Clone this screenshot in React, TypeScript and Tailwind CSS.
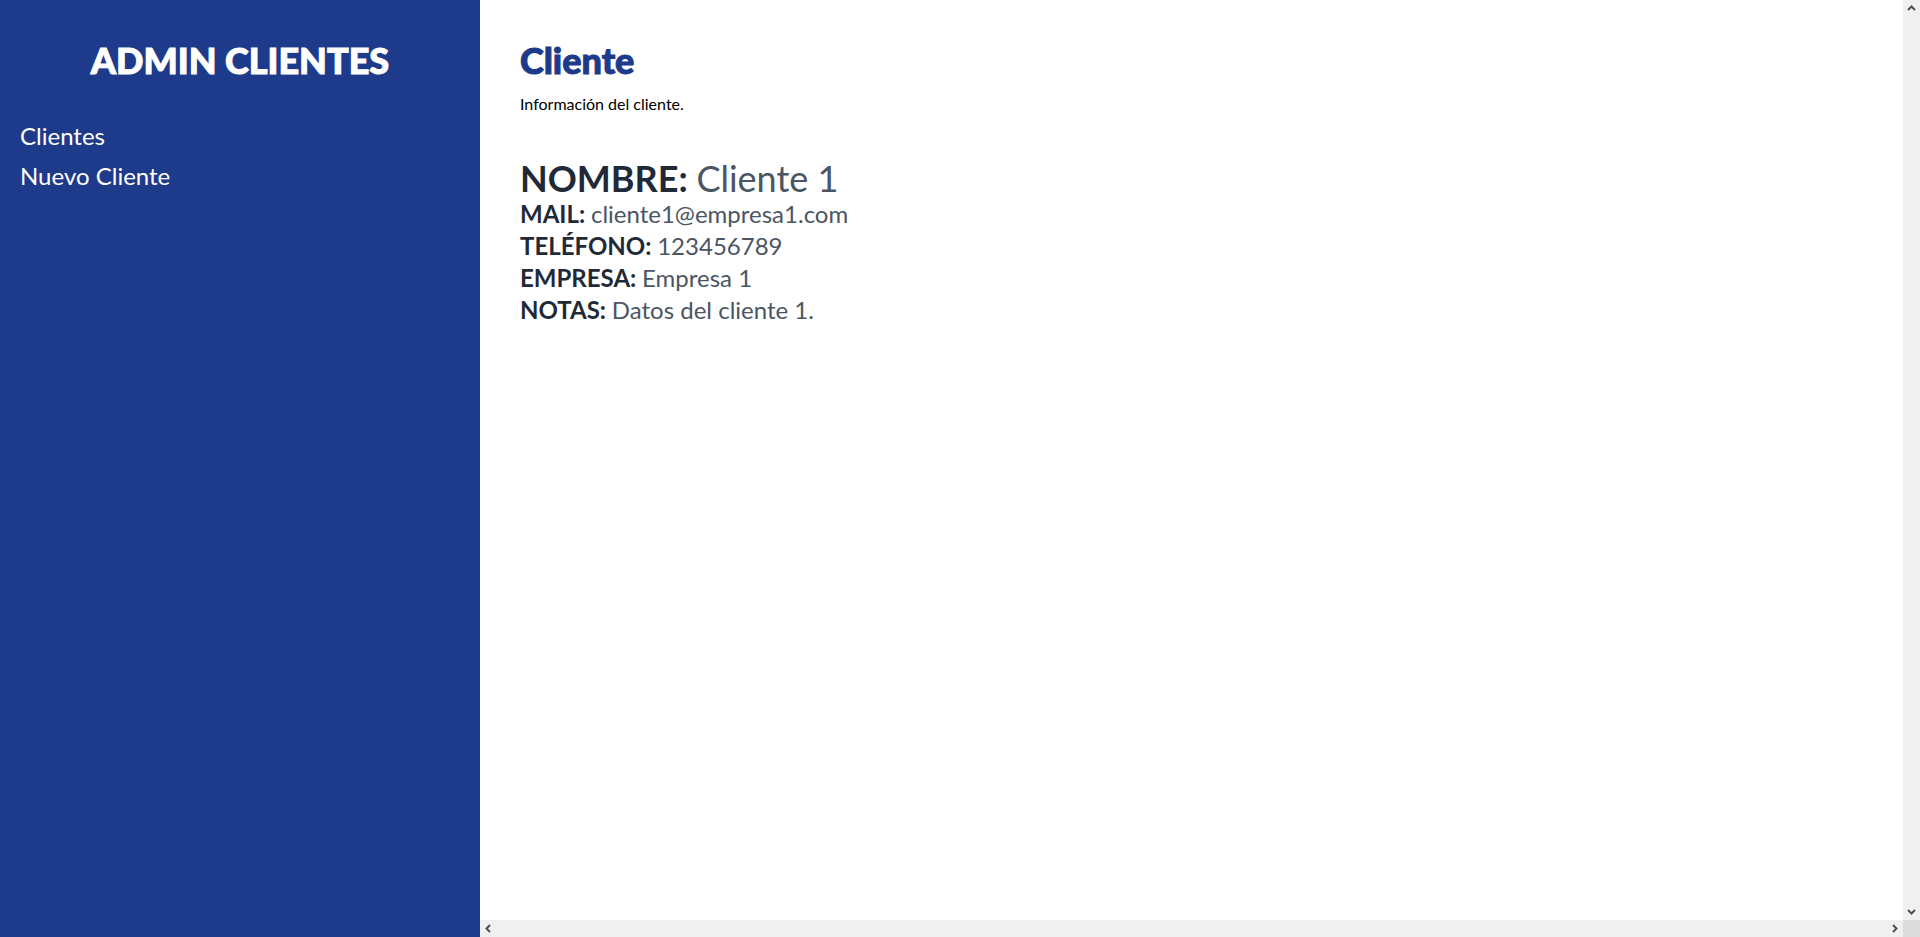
import React from "react";

const cliente = {
  nombre: "Cliente 1",
  mail: "cliente1@empresa1.com",
  telefono: "123456789",
  empresa: "Empresa 1",
  notas: "Datos del cliente 1.",
};

const Sidebar = () => {
  return (
    <aside className="w-1/4 shrink-0 h-screen bg-[#1e3a8a] px-5 pt-10">
      <h2 className="text-4xl font-black text-white text-center uppercase [-webkit-text-stroke:1px_white]">Admin Clientes</h2>
      <nav className="mt-10 flex flex-col gap-2">
        <a href="#" className="text-2xl text-white">Clientes</a>
        <a href="#" className="text-2xl text-white">Nuevo Cliente</a>
      </nav>
    </aside>
  );
};

const Row = ({ label, value }: { label: string; value: string }) => (
  <p className="text-2xl text-[#4b5563]">
    <span className="font-bold text-[#1f2937] uppercase">{label}: </span>
    {value}
  </p>
);

// chevrons drawn like the classic scrollbar buttons
const Arrow = ({ dir }: { dir: "up" | "down" | "left" | "right" }) => {
  const d = {
    up: "M1 6 L4.5 2.5 L8 6",
    down: "M1 3 L4.5 6.5 L8 3",
    left: "M6 1 L2.5 4.5 L6 8",
    right: "M3 1 L6.5 4.5 L3 8",
  }[dir];
  return (
    <svg width="9" height="9" viewBox="0 0 9 9">
      <path d={d} fill="none" stroke="#505050" strokeWidth="2" />
    </svg>
  );
};

export default function App() {
  return (
    <div className="flex h-screen overflow-hidden font-['Lato','Liberation_Sans',sans-serif]">
      <Sidebar />
      <div className="flex-1 h-screen flex flex-col min-w-0">
        <div className="flex flex-1 min-h-0">
          <main className="flex-1 p-10 bg-white overflow-hidden">
            <h1 className="text-4xl font-black text-[#1e3a8a] [-webkit-text-stroke:1px_#1e3a8a]">Cliente</h1>
            <p className="mt-3 text-base text-black">Información del cliente.</p>

            <div className="mt-[42px]">
              <p className="text-4xl text-[#4b5563]">
                <span className="font-bold text-[#1f2937] uppercase">Nombre: </span>
                {cliente.nombre}
              </p>
              <Row label="Mail" value={cliente.mail} />
              <Row label="Teléfono" value={cliente.telefono} />
              <Row label="Empresa" value={cliente.empresa} />
              <Row label="Notas" value={cliente.notas} />
            </div>
          </main>
          <div className="w-[17px] bg-[#f0f0f0] flex flex-col justify-between items-center py-1">
            <Arrow dir="up" />
            <Arrow dir="down" />
          </div>
        </div>
        <div className="h-[17px] flex bg-[#f0f0f0]">
          <div className="flex-1 flex justify-between items-center px-1">
            <Arrow dir="left" />
            <Arrow dir="right" />
          </div>
          <div className="w-[17px] bg-[#dcdcdc]" />
        </div>
      </div>
    </div>
  );
}
